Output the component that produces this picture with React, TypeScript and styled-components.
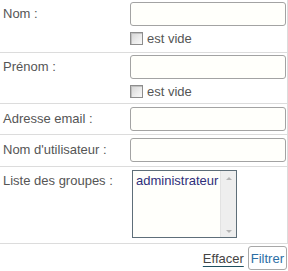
import styled, { createGlobalStyle } from 'styled-components';

const Global = createGlobalStyle`
  html, body { margin: 0; padding: 0; background: #ffffff; }
  body { font-family: "Liberation Sans", Arial, sans-serif; font-size: 13px; color: #555; }
`

const Form = styled.div`
  width: 288px;
  display: flex;
  flex-direction: column;
`

const Row = styled.div<{ $h: number; $top: number }>`
  display: grid;
  grid-template-columns: 130px 1fr;
  height: ${p => p.$h}px;
  box-sizing: border-box;
  padding-top: ${p => p.$top}px;
  border-bottom: 1px solid #dcdcdc;
  border-right: 1px solid #dcdcdc;
  width: 288px;
`

const Label = styled.div`
  padding-left: 3px;
  line-height: 23px;
  color: #555;
  white-space: nowrap;
`

const Field = styled.div`
  display: flex;
  flex-direction: column;
  align-items: flex-start;
`

const TextInput = styled.input`
  box-sizing: border-box;
  width: 156px;
  height: 24px;
  margin: 0;
  padding: 2px 4px;
  border: 1px solid #a3a3a3;
  border-radius: 3px;
  background: #fffffb;
  font: 13px "Liberation Sans", Arial, sans-serif;
  outline: none;
`

const CheckLine = styled.label`
  display: flex;
  align-items: center;
  gap: 4px;
  margin-top: 5px;
  height: 15px;
  color: #555;
`

const Box = styled.span`
  box-sizing: border-box;
  width: 13px;
  height: 13px;
  border: 1px solid #8d8d8d;
  background: linear-gradient(135deg, #d4d4d4 0%, #ececec 60%, #f8f8f8 100%);
  box-shadow: inset 1px 1px 0 #c0c0c0;
`

const ListBox = styled.div`
  box-sizing: border-box;
  margin: 1px 0 0 2px;
  width: 105px;
  height: 68px;
  border: 1px solid #5e6e78;
  background: #fffffb;
  display: flex;
`

const Option = styled.div`
  flex: 1;
  padding: 2px 0 0 3px;
  color: #2f2f7a;
  font-size: 13px;
  white-space: nowrap;
  overflow: hidden;
`

const Scroll = styled.div`
  width: 16px;
  flex: none;
  background: #eeeeee;
  border-left: 1px solid #e2e2e2;
  display: flex;
  flex-direction: column;
  justify-content: space-between;
  align-items: center;
  padding: 6px 0 4px;
  box-sizing: border-box;
`

const Arrow = styled.span<{ $up?: boolean }>`
  width: 0;
  height: 0;
  border-left: 3px solid transparent;
  border-right: 3px solid transparent;
  ${p => p.$up ? 'border-bottom: 3px solid #b5b5b5;' : 'border-top: 3px solid #b5b5b5;'}
`

const Footer = styled.div`
  display: flex;
  justify-content: flex-end;
  align-items: center;
  gap: 4px;
  padding: 2px 1px 0 0;
`

const ClearLink = styled.a`
  color: #444;
  font-size: 13px;
  text-decoration: underline;
  text-decoration-color: #1f4f5f;
  text-underline-offset: 3px;
  cursor: pointer;
`

const FilterButton = styled.button`
  box-sizing: border-box;
  height: 24px;
  padding: 0 2px;
  border: 1px solid #a8a8a8;
  border-radius: 3px;
  background: #ffffff;
  color: #2c6ea5;
  font: 13px "Liberation Sans", Arial, sans-serif;
`

const Check = () => (
  <CheckLine>
    <Box />
    <span>est vide</span>
  </CheckLine>
)

export default function App() {
  return (
    <>
      <Global />
      <Form>
        <Row $h={53} $top={2}>
          <Label>Nom :</Label>
          <Field>
            <TextInput />
            <Check />
          </Field>
        </Row>
        <Row $h={51} $top={2}>
          <Label>Prénom :</Label>
          <Field>
            <TextInput />
            <Check />
          </Field>
        </Row>
        <Row $h={31} $top={3}>
          <Label>Adresse email :</Label>
          <Field><TextInput /></Field>
        </Row>
        <Row $h={32} $top={3}>
          <Label>Nom d'utilisateur :</Label>
          <Field><TextInput /></Field>
        </Row>
        <Row $h={77} $top={2}>
          <Label>Liste des groupes :</Label>
          <Field>
            <ListBox>
              <Option>administrateur</Option>
              <Scroll>
                <Arrow $up />
                <Arrow />
              </Scroll>
            </ListBox>
          </Field>
        </Row>
        <Footer>
          <ClearLink>Effacer</ClearLink>
          <FilterButton>Filtrer</FilterButton>
        </Footer>
      </Form>
    </>
  )
}
